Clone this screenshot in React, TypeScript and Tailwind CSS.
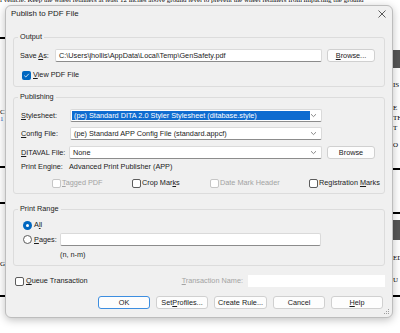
import React from "react";

const U = ({ children }: { children: React.ReactNode }) => (
  <span className="underline underline-offset-1">{children}</span>
);

function Field({ className = "", children }: { className?: string; children?: React.ReactNode }) {
  return (
    <div
      className={`flex h-[13px] items-center rounded-[2px] border border-[#dadada] border-b-[#8c8c8c] bg-white px-[3px] ${className}`}
    >
      {children}
    </div>
  );
}

function Chevron() {
  return (
    <svg width="7" height="5" viewBox="0 0 7 5" className="shrink-0">
      <path d="M1 1.2 L3.5 3.6 L6 1.2" fill="none" stroke="#6b6b6b" strokeWidth="0.8" />
    </svg>
  );
}

function Combo({ children, selected = false }: { children: React.ReactNode; selected?: boolean }) {
  return (
    <Field className="w-[252px] justify-between !pl-[1px] !pr-[4px]">
      <span
        className={`flex h-[9px] w-[238px] items-center pl-[2px] ${selected ? "bg-[#0f6cd0] text-white" : ""}`}
      >
        {children}
      </span>
      <Chevron />
    </Field>
  );
}

function Btn({ children, className = "" }: { children: React.ReactNode; className?: string }) {
  return (
    <div
      className={`flex h-[13px] items-center justify-center rounded-[3px] border border-[#d0d0d0] bg-[#fdfdfd] ${className}`}
    >
      {children}
    </div>
  );
}

function Check({ checked = false, disabled = false }: { checked?: boolean; disabled?: boolean }) {
  if (checked)
    return (
      <div className="flex h-[9px] w-[9px] shrink-0 items-center justify-center rounded-[2px] bg-[#0067c0]">
        <svg width="7" height="7" viewBox="0 0 7 7">
          <path d="M1.3 3.6 L2.8 5 L5.8 1.8" fill="none" stroke="white" strokeWidth="0.8" />
        </svg>
      </div>
    );
  return (
    <div
      className={`h-[9px] w-[9px] shrink-0 rounded-[2px] border bg-white ${disabled ? "border-[#c6c6c6]" : "border-[#5c5c5c]"}`}
    />
  );
}

function Group({ label, className = "", children }: { label: string; className?: string; children: React.ReactNode }) {
  return (
    <div className={`relative rounded-[3px] border border-[#dcdcdc] ${className}`}>
      <span className="absolute -top-[6px] left-[4px] bg-[#f0f0f0] px-[2px] leading-[10px]">{label}</span>
      {children}
    </div>
  );
}

function Backdrop() {
  return (
    <div className="absolute inset-0 whitespace-nowrap font-['Liberation_Serif',serif] text-[7px] text-black">
      <div className="absolute -top-[4px] left-0 leading-[8px]">
        i vehicle. Keep the wheel retainers at least 12 inches above ground level to prevent the wheel retainers from impacting the ground
      </div>
      {/* left margin */}
      <div className="absolute left-0 top-[37px] h-[2px] w-[6px] bg-black" />
      <div className="absolute left-0 top-[108px] leading-[8px]">C</div>
      <div className="absolute left-0 top-[115px] leading-[8px] text-[#2060c0]">1</div>
      <div className="absolute left-0 top-[166px] h-[2px] w-[6px] bg-black" />
      <div className="absolute left-0 top-[202px] h-[2px] w-[6px] bg-black" />
      <div className="absolute left-0 top-[260px] leading-[8px]">G</div>
      <div className="absolute left-0 top-[295px] h-[2px] w-[6px] bg-black" />
      {/* right margin */}
      <div className="absolute left-[393px] top-[50px] h-[18px] w-[7px] bg-[#555]" />
      <div className="absolute left-[393px] top-[81px] leading-[8px]">IS</div>
      <div className="absolute left-[393px] top-[104px] leading-[8px]">E</div>
      <div className="absolute left-[393px] top-[114px] leading-[8px]">TH</div>
      <div className="absolute left-[393px] top-[124px] leading-[8px]">T</div>
      <div className="absolute left-[393px] top-[141px] leading-[8px]">O</div>
      <div className="absolute left-[393px] top-[168px] h-[2px] w-[7px] bg-black" />
      <div className="absolute left-[393px] top-[212px] h-[2px] w-[7px] bg-black" />
      <div className="absolute left-[393px] top-[220px] h-[20px] w-[7px] bg-[#555]" />
      <div className="absolute left-[393px] top-[254px] leading-[8px]">ED</div>
      <div className="absolute left-[393px] top-[276px] leading-[8px]">U</div>
      <div className="absolute left-[393px] top-[295px] h-[2px] w-[7px] bg-black" />
    </div>
  );
}

export default function App() {
  return (
    <div className="relative h-[333px] w-[400px] overflow-hidden bg-white">
      <Backdrop />

      <div className="absolute left-[5px] top-[5px] flex h-[313px] w-[388px] flex-col whitespace-nowrap rounded-[6px] border border-[#bdbdbd] bg-[#f0f0f0] font-['Liberation_Sans',Arial,sans-serif] text-[7.3px] leading-[10px] text-[#1b1b1b] shadow-[0_2px_8px_rgba(0,0,0,0.25)]">
        {/* title bar */}
        <div className="flex h-[16px] items-center justify-between pl-[5px] pr-[6px]">
          <span className="text-[7.9px]">Publish to PDF File</span>
          <svg width="8" height="8" viewBox="0 0 8 8">
            <path d="M0.5 0.5 L7.5 7.5 M7.5 0.5 L0.5 7.5" stroke="#333" strokeWidth="0.8" />
          </svg>
        </div>

        <div className="flex flex-col px-[7px]">
          {/* Output */}
          <Group label="Output" className="mt-[15px] h-[50px]">
            <div className="mt-[11px] flex items-center pl-[6px]">
              <span className="w-[35px]">
                Save <U>A</U>s:
              </span>
              <Field className="w-[267px]">C:\Users\jhollis\AppData\Local\Temp\GenSafety.pdf</Field>
              <Btn className="ml-[5px] w-[48px]">
                <U>B</U>rowse...
              </Btn>
            </div>
            <div className="mt-[8px] flex items-center gap-[2px] pl-[8px]">
              <Check checked />
              <span>
                <U>V</U>iew PDF File
              </span>
            </div>
          </Group>

          {/* Publishing */}
          <Group label="Publishing" className="mt-[10px] h-[97px]">
            <div className="mt-[11px] flex items-center pl-[7px]">
              <span className="w-[49px]">
                <U>S</U>tylesheet:
              </span>
              <Combo selected>(pe) Standard DITA 2.0 Styler Stylesheet (ditabase.style)</Combo>
            </div>
            <div className="mt-[5px] flex items-center pl-[7px]">
              <span className="w-[49px]">
                <U>C</U>onfig File:
              </span>
              <Combo>(pe) Standard APP Config File (standard.appcf)</Combo>
            </div>
            <div className="mt-[6px] flex items-center pl-[7px]">
              <span className="w-[48px]">
                <U>D</U>ITAVAL File:
              </span>
              <Field className="w-[253px] justify-between !pr-[4px]">
                <span>None</span>
                <Chevron />
              </Field>
              <Btn className="ml-[5px] w-[48px]">Browse</Btn>
            </div>
            <div className="mt-[3px] flex items-center pl-[7px]">
              <span className="w-[48px]">Print Engine:</span>
              <span>Advanced Print Publisher (APP)</span>
            </div>
            <div className="mt-[6px] flex items-center pl-[38px]">
              <div className="flex w-[80px] items-center gap-[1px] text-[#a3a3a3]">
                <Check disabled />
                <span>
                  <U>T</U>agged PDF
                </span>
              </div>
              <div className="flex w-[78px] items-center gap-[1px]">
                <Check />
                <span>
                  Crop Mar<U>k</U>s
                </span>
              </div>
              <div className="flex w-[99px] items-center gap-[1px] text-[#a3a3a3]">
                <Check disabled />
                <span>Date Mark Header</span>
              </div>
              <div className="flex items-center gap-[1px]">
                <Check />
                <span>
                  Registration <U>M</U>arks
                </span>
              </div>
            </div>
          </Group>

          {/* Print Range */}
          <Group label="Print Range" className="mt-[15px] h-[57px]">
            <div className="mt-[10px] flex items-center gap-[2px] pl-[9px]">
              <div className="flex h-[9px] w-[9px] items-center justify-center rounded-full bg-[#0067c0]">
                <div className="h-[3px] w-[3px] rounded-full bg-white" />
              </div>
              <span>
                A<U>l</U>l
              </span>
            </div>
            <div className="mt-[3px] flex items-center pl-[9px]">
              <div className="h-[9px] w-[9px] rounded-full border border-[#5c5c5c] bg-white" />
              <span className="ml-[2px] w-[26px]">
                <U>P</U>ages:
              </span>
              <Field className="w-[261px]" />
            </div>
            <div className="mt-[4px] pl-[46px]">(n, n-m)</div>
          </Group>

          {/* Queue */}
          <div className="mt-[9px] flex h-[12px] items-center">
            <div className="flex items-center gap-[2px] pl-[2px]">
              <Check />
              <span>
                <U>Q</U>ueue Transaction
              </span>
            </div>
            <span className="ml-auto mr-[5px] text-[#a3a3a3]">
              <U>T</U>ransaction Name:
            </span>
            <div className="h-[12px] w-[137px] bg-white" />
          </div>

          {/* buttons */}
          <div className="mt-[9px] flex justify-end gap-[6px] pr-[2px]">
            <Btn className="w-[52px] !border-[#3d8ee0]">OK</Btn>
            <Btn className="w-[52px]">
              Set <U>P</U>rofiles...
            </Btn>
            <Btn className="w-[53px]">Create Rule...</Btn>
            <Btn className="w-[52px]">Cancel</Btn>
            <Btn className="w-[52px]">
              <U>H</U>elp
            </Btn>
          </div>
        </div>

        {/* resize grip */}
        <svg width="6" height="6" viewBox="0 0 6 6" className="absolute bottom-[2px] right-[2px]">
          <g fill="#a0a0a0">
            <rect x="4" y="0" width="1" height="1" />
            <rect x="2" y="2" width="1" height="1" />
            <rect x="4" y="2" width="1" height="1" />
            <rect x="0" y="4" width="1" height="1" />
            <rect x="2" y="4" width="1" height="1" />
            <rect x="4" y="4" width="1" height="1" />
          </g>
        </svg>
      </div>
    </div>
  );
}
